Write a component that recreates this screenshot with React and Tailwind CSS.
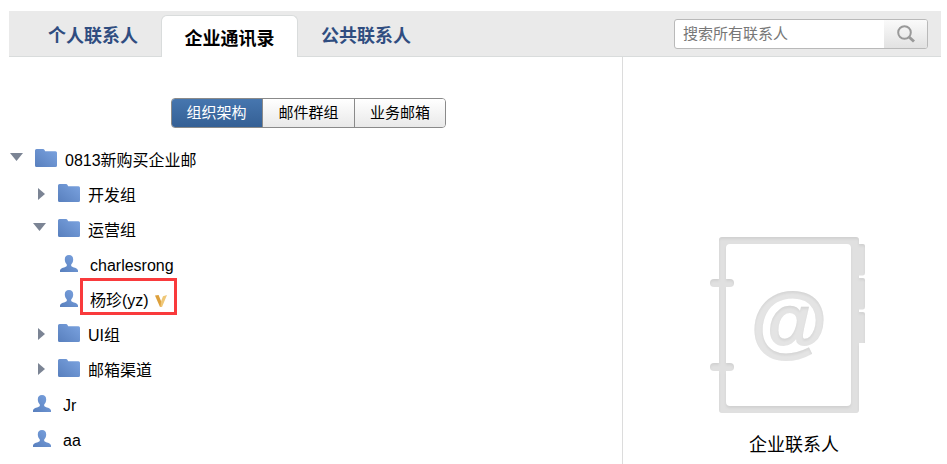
import { useState } from "react";

const tabs = [
  { id: "personal", name: "个人联系人" },
  { id: "company", name: "企业通讯录" },
  { id: "public", name: "公共联系人" },
];

const views = [
  { id: "org", name: "组织架构" },
  { id: "group", name: "邮件群组" },
  { id: "biz", name: "业务邮箱" },
];

const members = [
  { id: "dev", type: "folder", name: "开发组", children: [] },
  {
    id: "ops",
    type: "folder",
    name: "运营组",
    children: [
      { id: "charlesrong", name: "charlesrong" },
      { id: "yz", name: "杨珍(yz)", vip: true },
    ],
  },
  { id: "ui", type: "folder", name: "UI组", children: [] },
  { id: "channel", type: "folder", name: "邮箱渠道", children: [] },
  { id: "jr", type: "user", name: "Jr" },
  { id: "aa", type: "user", name: "aa" },
];

function FolderIcon() {
  return (
    <svg viewBox="0 0 22 18" className="mr-2 h-[18px] w-[22px]" aria-hidden="true">
      <path
        d="M0 1.5Q0 0 1.5 0H8Q9 0 9.5 1L10.2 2.2H20.5Q22 2.2 22 3.7V16.5Q22 18 20.5 18H1.5Q0 18 0 16.5Z"
        fill="url(#blue)"
      />
    </svg>
  );
}

function UserIcon() {
  return (
    <svg viewBox="0 0 18 17" className="mt-0.5 h-[17px] w-[18px] shrink-0" aria-hidden="true">
      <path
        d="M9 0C11.8 0 13.2 1.8 13.2 4.4C13.2 6.6 12.2 8.2 11.2 9.4V11C12.4 12.4 18 13 18 15.6V17H0V15.6C0 13 5.6 12.4 6.8 11V9.4C5.8 8.2 4.8 6.6 4.8 4.4C4.8 1.8 6.2 0 9 0Z"
        fill="url(#blue)"
      />
    </svg>
  );
}

function Arrow({ open }) {
  return open ? (
    <svg viewBox="0 0 13 8" className="mb-0.5 h-2 w-[13px]" aria-hidden="true">
      <path d="M0 0H13L6.5 8Z" fill="#7b8494" />
    </svg>
  ) : (
    <svg viewBox="0 0 7 12" className="mt-0.5 ml-[5px] h-3 w-[7px]" aria-hidden="true">
      <path d="M0 0L7 6L0 12Z" fill="#7b8494" />
    </svg>
  );
}

function VipIcon() {
  return (
    <svg viewBox="0 0 12 12" className="h-3 w-3" aria-hidden="true">
      <path d="M0 0.5L3.6 0L6.4 7L5.8 12H5Z" fill="#dda03c" />
      <path d="M8 1.2L12 0L7 12H5.4L6 6.5Z" fill="#efc777" />
    </svg>
  );
}

function FolderRow({ name, open, onToggle }) {
  return (
    <button
      type="button"
      aria-expanded={open}
      onClick={onToggle}
      className="flex h-[35px] items-center"
    >
      <span className="flex w-[25px]">
        <Arrow open={open} />
      </span>
      <FolderIcon />
      <span className="pt-1.5">{name}</span>
    </button>
  );
}

function UserRow({ name, vip }) {
  return (
    <a href="#user" className="flex h-[35px] w-fit items-center">
      <UserIcon />
      {vip ? (
        <span className="mb-0.5 ml-0.5 flex h-[37px] items-center gap-[6px] border-3 border-[#f93a3c] px-[7px] pt-2">
          {name}
          <VipIcon />
        </span>
      ) : (
        <span className="ml-3 pt-1.5">{name}</span>
      )}
    </a>
  );
}

function ContactBook() {
  return (
    <svg viewBox="0 0 168 176" className="h-[176px] w-[168px]" aria-hidden="true">
      <defs>
        <filter id="inner" x="-5%" y="-5%" width="110%" height="110%">
          <feOffset in="SourceAlpha" dx="0" dy="1.5" />
          <feGaussianBlur stdDeviation="1" />
          <feComposite in="SourceAlpha" operator="out" result="edge" />
          <feFlood floodColor="#000" floodOpacity="0.14" />
          <feComposite in2="edge" operator="in" />
          <feMerge>
            <feMergeNode in="SourceGraphic" />
            <feMergeNode />
          </feMerge>
        </filter>
      </defs>
      <g fill="#e0e0e0" filter="url(#inner)">
        <path d="M148 7H153Q155 7 155 9V36Q155 38 153 38.5H148Z" />
        <path d="M148 41H153Q155 41 155 43V70Q155 72 153 72.5H148Z" />
        <path d="M148 75H153Q155 75 155 77V106H148Z" />
        <path
          fillRule="evenodd"
          d="M12 0H146Q149 0 149 3V173Q149 176 146 176H12Q9 176 9 173V3Q9 0 12 0ZM20 7Q16 7 16 11V165Q16 169 20 169H137Q141 169 141 165V11Q141 7 137 7Z"
        />
        <rect x="0" y="42" width="24" height="8" rx="4" />
        <rect x="0" y="126" width="24" height="8" rx="4" />
      </g>
      <text
        x="79"
        y="111"
        textAnchor="middle"
        fill="#e4e4e4"
        stroke="#e4e4e4"
        strokeWidth="2"
        filter="url(#inner)"
        className="font-['Liberation_Sans',sans-serif] text-[78px] font-bold"
      >
        @
      </text>
    </svg>
  );
}

export default function App() {
  const [tab, setTab] = useState("company");
  const [view, setView] = useState("org");
  const [opened, setOpened] = useState({ root: true, ops: true });

  const toggle = (id) => setOpened({ ...opened, [id]: !opened[id] });

  return (
    <div className="flex min-h-screen flex-col bg-white pt-[11px] pr-[6px] pl-[9px] font-['Liberation_Sans','Noto_Sans_CJK_SC',sans-serif] text-base text-black">
      <svg className="absolute h-0 w-0" aria-hidden="true">
        <linearGradient id="blue" x1="1" y1="0" x2="0" y2="1">
          <stop offset="0" stopColor="#7ba3e0" />
          <stop offset="1" stopColor="#587fbd" />
        </linearGradient>
      </svg>

      <header className="flex h-[46px] items-start justify-between border-b border-[#d9dcdc] bg-[#eaeaea]">
        <nav className="flex pt-1 pl-4" role="tablist">
          {tabs.map((item) => (
            <button
              key={item.id}
              type="button"
              role="tab"
              aria-selected={tab === item.id}
              onClick={() => setTab(item.id)}
              className={
                tab === item.id
                  ? "h-[42px] w-[137px] rounded-t-md border border-b-0 border-[#d9dcdc] bg-white pt-1 text-lg font-bold text-black"
                  : "h-[42px] w-[136px] text-lg font-bold text-[#2f4d80]"
              }
            >
              {item.name}
            </button>
          ))}
        </nav>
        <form
          role="search"
          onSubmit={(e) => e.preventDefault()}
          className="mt-2 mr-[13px] flex h-[30px] w-[254px] overflow-hidden rounded-[3px] border border-[#b9b9b9] bg-white"
        >
          <input
            type="text"
            aria-label="搜索所有联系人"
            placeholder="搜索所有联系人"
            className="min-w-0 flex-1 pl-2 text-[15px] outline-none placeholder:text-[#777]"
          />
          <button
            type="submit"
            aria-label="搜索"
            className="flex w-[43px] items-center justify-center bg-linear-to-b from-[#fafafa] to-[#e2e2e2]"
          >
            <svg viewBox="0 0 18 18" className="h-[18px] w-[18px]" fill="none" stroke="#999" aria-hidden="true">
              <circle cx="7.5" cy="7.5" r="6.3" strokeWidth="2" />
              <path d="M12 12L17 16.5" strokeWidth="3" />
            </svg>
          </button>
        </form>
      </header>

      <div className="flex flex-1">
        <main className="min-w-0 flex-1">
          <div className="mt-[41px] ml-[162px] flex w-fit overflow-hidden rounded-[4px] border border-[#8a8a8a]">
            {views.map((item) => (
              <button
                key={item.id}
                type="button"
                aria-pressed={view === item.id}
                onClick={() => setView(item.id)}
                className={
                  view === item.id
                    ? "-my-px -ml-px h-[30px] w-[92px] border-r border-[#8a8a8a] bg-linear-to-b from-[#4777b0] to-[#345f94] text-[15px] text-white last:border-r-0"
                    : "h-7 w-[92px] border-r border-[#8a8a8a] bg-linear-to-b from-white to-[#e9e9e9] text-[15px] last:w-[90px] last:border-r-0"
                }
              >
                {item.name}
              </button>
            ))}
          </div>

          <div className="mt-3 pl-px">
            <FolderRow
              name="0813新购买企业邮"
              open={!!opened.root}
              onToggle={() => toggle("root")}
            />
            {opened.root && (
              <ul className="pl-[23px]">
                {members.map((item) =>
                  item.type === "folder" ? (
                    <li key={item.id}>
                      <FolderRow
                        name={item.name}
                        open={!!opened[item.id]}
                        onToggle={() => toggle(item.id)}
                      />
                      {opened[item.id] && (
                        <ul className="pl-[27px]">
                          {item.children.map((user) => (
                            <li key={user.id}>
                              <UserRow name={user.name} vip={user.vip} />
                            </li>
                          ))}
                        </ul>
                      )}
                    </li>
                  ) : (
                    <li key={item.id}>
                      <UserRow name={item.name} />
                    </li>
                  )
                )}
              </ul>
            )}
          </div>
        </main>

        <aside className="flex w-[319px] flex-col items-center border-l border-[#dcdcdc] pt-[180px] pl-6">
          <ContactBook />
          <p className="mt-[18px] text-lg">企业联系人</p>
        </aside>
      </div>
    </div>
  );
}
